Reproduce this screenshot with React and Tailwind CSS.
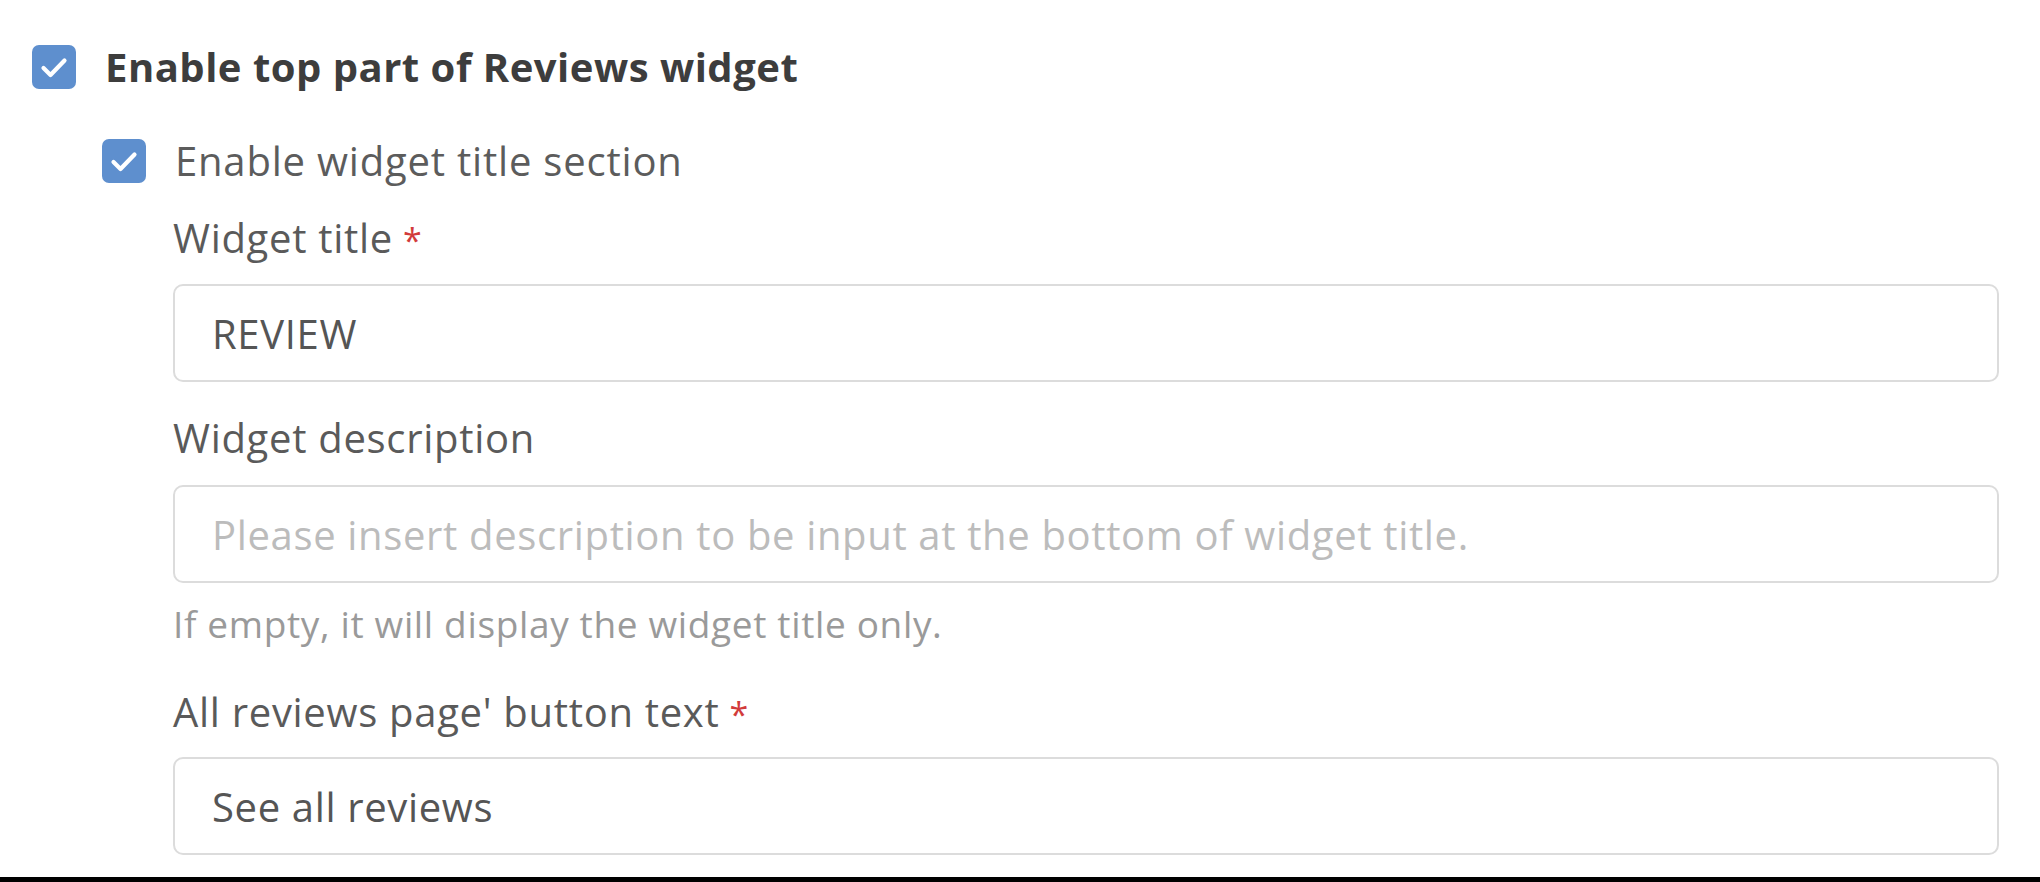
import { useState } from "react";

const CheckBox = ({ checked, onChange }) => (
  <button
    type="button"
    onClick={onChange}
    className={`w-[44px] h-[44px] shrink-0 rounded-[7px] flex items-center justify-center ${
      checked ? "bg-[#5e8fce]" : "bg-white border-2 border-[#cfcfcf]"
    }`}
  >
    {checked && (
      <svg width="44" height="44" viewBox="0 0 44 44" fill="none">
        <polyline
          points="11.5,23 18.5,30 32.5,15.5"
          stroke="white"
          strokeWidth="4.2"
          strokeLinecap="round"
          strokeLinejoin="round"
        />
      </svg>
    )}
  </button>
);

const Label = ({ children, required }) => (
  <div className="h-[40px] text-[40px] leading-[40px] tracking-[0.7px] text-[#5a5a5a]">
    {children}
    {required && <span className="text-[#d23b3b] ml-[10px] text-[34px] leading-none">*</span>}
  </div>
);

const TextInput = ({ value, onChange, placeholder }) => (
  <input
    value={value}
    onChange={(e) => onChange(e.target.value)}
    placeholder={placeholder}
    className="w-full h-[98px] border-2 border-[#dcdcdc] rounded-[10px] px-[37px] text-[40px] tracking-[0.65px] text-[#555] placeholder:text-[#bcbcbc] outline-none bg-white"
  />
);

const App = () => {
  const [enableTop, setEnableTop] = useState(true);
  const [enableTitle, setEnableTitle] = useState(true);
  const [title, setTitle] = useState("REVIEW");
  const [description, setDescription] = useState("");
  const [buttonText, setButtonText] = useState("See all reviews");

  return (
    <div className="w-[2040px] h-[882px] bg-white flex flex-col font-['Open_Sans',sans-serif] overflow-hidden">
      <div className="flex-1 pl-[32px] pr-[41px] pt-[45px]">
        <div className="flex items-center gap-[29px]">
          <CheckBox checked={enableTop} onChange={() => setEnableTop(!enableTop)} />
          <span className="text-[40px] leading-[44px] tracking-[0.5px] font-bold text-[#3d3d3d]">
            Enable top part of Reviews widget
          </span>
        </div>

        <div className="pl-[70px] mt-[50px]">
          <div className="flex items-center gap-[29px]">
            <CheckBox checked={enableTitle} onChange={() => setEnableTitle(!enableTitle)} />
            <span className="text-[40px] leading-[44px] tracking-[0.8px] text-[#5c5c5c]">
              Enable widget title section
            </span>
          </div>

          <div className="pl-[71px] mt-[35px]">
            <Label required>Widget title</Label>
            <div className="mt-[26px]">
              <TextInput value={title} onChange={setTitle} />
            </div>

            <div className="mt-[36px]">
              <Label>Widget description</Label>
            </div>
            <div className="mt-[27px]">
              <TextInput
                value={description}
                onChange={setDescription}
                placeholder="Please insert description to be input at the bottom of widget title."
              />
            </div>
            <div className="mt-[21px] h-[40px] text-[37px] leading-[40px] tracking-[0.65px] text-[#9a9a9a]">
              If empty, it will display the widget title only.
            </div>

            <div className="mt-[48px]">
              <Label required>All reviews page' button text</Label>
            </div>
            <div className="mt-[25px]">
              <TextInput value={buttonText} onChange={setButtonText} />
            </div>
          </div>
        </div>
      </div>
      <div className="h-[5px] bg-black" />
    </div>
  );
};

export default App;
